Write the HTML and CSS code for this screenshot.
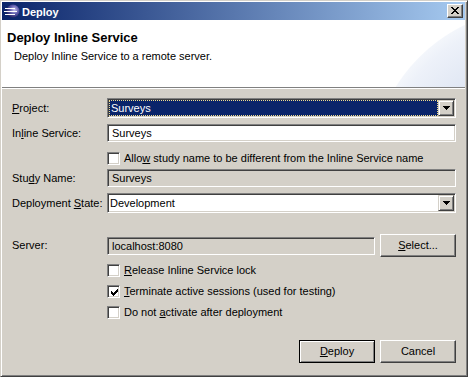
FILE: index.html
```html
<!DOCTYPE html>
<html>
<head>
<meta charset="utf-8">
<title>Deploy</title>
<link rel="stylesheet" href="styles.css">
</head>
<body>
<div class="window">
  <div class="titlebar">
    <svg class="app-icon" width="16" height="16" viewBox="0 0 16 16">
      <defs>
        <radialGradient id="sph" cx="0.6" cy="0.4" r="0.7">
          <stop offset="0" stop-color="#c9c6f2"/>
          <stop offset="0.5" stop-color="#5a58a8"/>
          <stop offset="1" stop-color="#1c1a52"/>
        </radialGradient>
      </defs>
      <circle cx="9" cy="8" r="6.5" fill="url(#sph)"/>
      <g fill="#ffffff" shape-rendering="crispEdges">
        <rect x="1" y="5" width="10" height="1"/>
        <rect x="0" y="8" width="13" height="1"/>
        <rect x="1" y="11" width="10" height="1"/>
      </g>
    </svg>
    <span class="title">Deploy</span>
    <div class="close-btn">
      <svg width="8" height="7" viewBox="0 0 8 7" shape-rendering="crispEdges"><path fill="#000" d="M0 0h2v1H0zM6 0h2v1H6zM1 1h2v1H1zM5 1h2v1H5zM2 2h4v1H2zM3 3h2v1H3zM2 4h4v1H2zM1 5h2v1H1zM5 5h2v1H5zM0 6h2v1H0zM6 6h2v1H6z"/></svg>
    </div>
  </div>

  <div class="banner">
    <div class="banner-title">Deploy Inline Service</div>
    <div class="banner-desc">Deploy Inline Service to a remote server.</div>
  </div>
  <div class="separator"></div>

  <div class="content">
    <div class="row row-project">
      <span class="label"><u>P</u>roject:</span>
      <div class="sunken combo">
        <span class="combo-text selected"><span class="focus">Surveys</span></span>
        <span class="drop-btn"><svg width="7" height="4" viewBox="0 0 7 4" shape-rendering="crispEdges"><path fill="#000" d="M0 0h7v1H0zM1 1h5v1H1zM2 2h3v1H2zM3 3h1v1H3z"/></svg></span>
      </div>
    </div>

    <div class="row row-service">
      <span class="label">In<u>l</u>ine Service:</span>
      <div class="sunken textfield"><span class="field-text">Surveys</span></div>
    </div>

    <div class="row row-allow check-row">
      <span class="checkbox"></span>
      <span class="check-label">Allo<u>w</u> study name to be different from the Inline Service name</span>
    </div>

    <div class="row row-study">
      <span class="label">Stu<u>d</u>y Name:</span>
      <div class="sunken textfield disabled"><span class="field-text">Surveys</span></div>
    </div>

    <div class="row row-state">
      <span class="label">Deployment <u>S</u>tate:</span>
      <div class="sunken combo">
        <span class="combo-text">Development</span>
        <span class="drop-btn"><svg width="7" height="4" viewBox="0 0 7 4" shape-rendering="crispEdges"><path fill="#000" d="M0 0h7v1H0zM1 1h5v1H1zM2 2h3v1H2zM3 3h1v1H3z"/></svg></span>
      </div>
    </div>

    <div class="row row-server">
      <span class="label">Server:</span>
      <div class="sunken textfield disabled server-field"><span class="field-text">localhost:8080</span></div>
      <div class="button"><span><u>S</u>elect...</span></div>
    </div>

    <div class="row row-release check-row">
      <span class="checkbox"></span>
      <span class="check-label"><u>R</u>elease Inline Service lock</span>
    </div>

    <div class="row row-terminate check-row">
      <span class="checkbox"><svg width="7" height="7" viewBox="0 0 7 7" shape-rendering="crispEdges"><path fill="#000" d="M0 2h1v3H0zM1 3h1v3H1zM2 4h1v3H2zM3 3h1v3H3zM4 2h1v3H4zM5 1h1v3H5zM6 0h1v3H6z"/></svg></span>
      <span class="check-label"><u>T</u>erminate active sessions (used for testing)</span>
    </div>

    <div class="row row-activate check-row">
      <span class="checkbox"></span>
      <span class="check-label">Do not <u>a</u>ctivate after deployment</span>
    </div>

    <div class="row row-buttons">
      <div class="button default"><span><u>D</u>eploy</span></div>
      <div class="button"><span>Cancel</span></div>
    </div>
  </div>
</div>
</body>
</html>
```

FILE: styles.css
```css
* { box-sizing: border-box; }

html, body {
  margin: 0;
  padding: 0;
  background: #d4d0c8;
}

body {
  font-family: "Liberation Sans", Arial, sans-serif;
  font-size: 11px;
  color: #000;
}

u { text-decoration: underline; text-underline-offset: 1px; }

.window {
  width: 468px;
  height: 377px;
  background: #d4d0c8;
  border: 1px solid;
  border-color: #d4d0c8 #404040 #404040 #d4d0c8;
  padding: 1px 2px 2px 1px;
  box-shadow: inset 1px 1px #ffffff, inset -1px -1px #808080;
  display: flex;
  flex-direction: column;
}

/* Title bar */
.titlebar {
  height: 18px;
  flex: none;
  display: flex;
  align-items: center;
  background: linear-gradient(to right, #0a246a, #a6caf0);
  padding-left: 2px;
}

.app-icon {
  flex: none;
  display: block;
}

.title {
  margin-left: 2px;
  padding-top: 1px;
  color: #ffffff;
  font-weight: bold;
  font-size: 11px;
  line-height: 16px;
}

.close-btn {
  margin-left: auto;
  margin-right: 2px;
  width: 16px;
  height: 14px;
  background: #d4d0c8;
  border: 1px solid;
  border-color: #ffffff #404040 #404040 #ffffff;
  box-shadow: inset -1px -1px #808080;
  display: flex;
  align-items: center;
  justify-content: center;
  padding-bottom: 1px;
}

.close-btn svg { display: block; }

/* Banner */
.banner {
  height: 67px;
  flex: none;
  padding: 10px 0 0 5px;
  background:
    radial-gradient(circle at 535px 155px,
      #d9e1f1 0,
      #dfe6f3 110px,
      #edf1f9 155px,
      #f3f6fb 166px,
      #ffffff 167px);
}

.banner-title {
  font-weight: bold;
  font-size: 13px;
  line-height: 15px;
}

.banner-desc {
  margin-top: 5px;
  margin-left: 7px;
  line-height: 13px;
}

.separator {
  height: 2px;
  flex: none;
  border-top: 1px solid #808080;
  border-bottom: 1px solid #ffffff;
}

/* Body */
.content {
  flex: 1;
  display: flex;
  flex-direction: column;
  padding: 0 9px 0 10px;
}

.row {
  display: flex;
  align-items: center;
  flex: none;
}

.label {
  width: 95px;
  flex: none;
  line-height: 13px;
  white-space: nowrap;
}

.row-project   { margin-top: 9px;  height: 20px; }
.row-service   { margin-top: 6px;  height: 18px; }
.row-allow     { margin-top: 10px; height: 13px; }
.row-study     { margin-top: 4px;  height: 18px; }
.row-state     { margin-top: 6px;  height: 20px; }
.row-server    { margin-top: 21px; height: 23px; }
.row-release   { margin-top: 7px;  height: 13px; }
.row-terminate { margin-top: 8px;  height: 13px; }
.row-activate  { margin-top: 8px;  height: 13px; }
.row-buttons   { margin-top: 21px; height: 23px; justify-content: flex-end; gap: 5px; }

/* Sunken controls */
.sunken {
  border: 1px solid;
  border-color: #808080 #ffffff #ffffff #808080;
  padding: 1px;
  box-shadow: inset 1px 1px #404040, inset -1px -1px #d4d0c8;
  background: #ffffff;
}

.combo {
  flex: 1;
  height: 20px;
  display: flex;
}

.combo-text {
  flex: 1;
  line-height: 16px;
  padding-left: 1px;
  white-space: nowrap;
}

.combo-text.selected {
  background: #0a246a;
  color: #ffffff;
  padding-left: 0;
  display: flex;
}

.focus {
  flex: 1;
  outline: 1px dotted #f0dc8c;
  outline-offset: -1px;
  padding-left: 2px;
  line-height: 16px;
}

.drop-btn {
  width: 16px;
  height: 16px;
  flex: none;
  background: #d4d0c8;
  border: 1px solid;
  border-color: #d4d0c8 #404040 #404040 #d4d0c8;
  box-shadow: inset 1px 1px #ffffff, inset -1px -1px #808080;
  display: flex;
  align-items: center;
  justify-content: center;
  padding-left: 1px;
}

.drop-btn svg { display: block; }

.textfield {
  flex: 1;
  height: 18px;
  display: flex;
  align-items: center;
}

.textfield.disabled { background: #d4d0c8; }

.field-text {
  padding-left: 3px;
  line-height: 14px;
  white-space: nowrap;
}

.server-field {
  flex: none;
  width: 268px;
}

/* Checkboxes */
.check-row { padding-left: 95px; }

.checkbox {
  width: 13px;
  height: 13px;
  flex: none;
  background: #ffffff;
  border: 1px solid;
  border-color: #808080 #ffffff #ffffff #808080;
  box-shadow: inset 1px 1px #404040, inset -1px -1px #d4d0c8;
  padding: 3px;
  display: block;
}

.checkbox svg { display: block; }

.check-label {
  margin-left: 4px;
  line-height: 13px;
  white-space: nowrap;
}

/* Buttons */
.button {
  width: 76px;
  height: 23px;
  flex: none;
  background: #d4d0c8;
  border: 1px solid;
  border-color: #ffffff #404040 #404040 #ffffff;
  box-shadow: inset -1px -1px #808080;
  display: flex;
  align-items: center;
  justify-content: center;
  line-height: 13px;
}

.row-server .button { margin-left: 5px; }

.button.default {
  border-color: #000000;
  box-shadow: inset 1px 1px #ffffff, inset -1px -1px #808080;
}
```
